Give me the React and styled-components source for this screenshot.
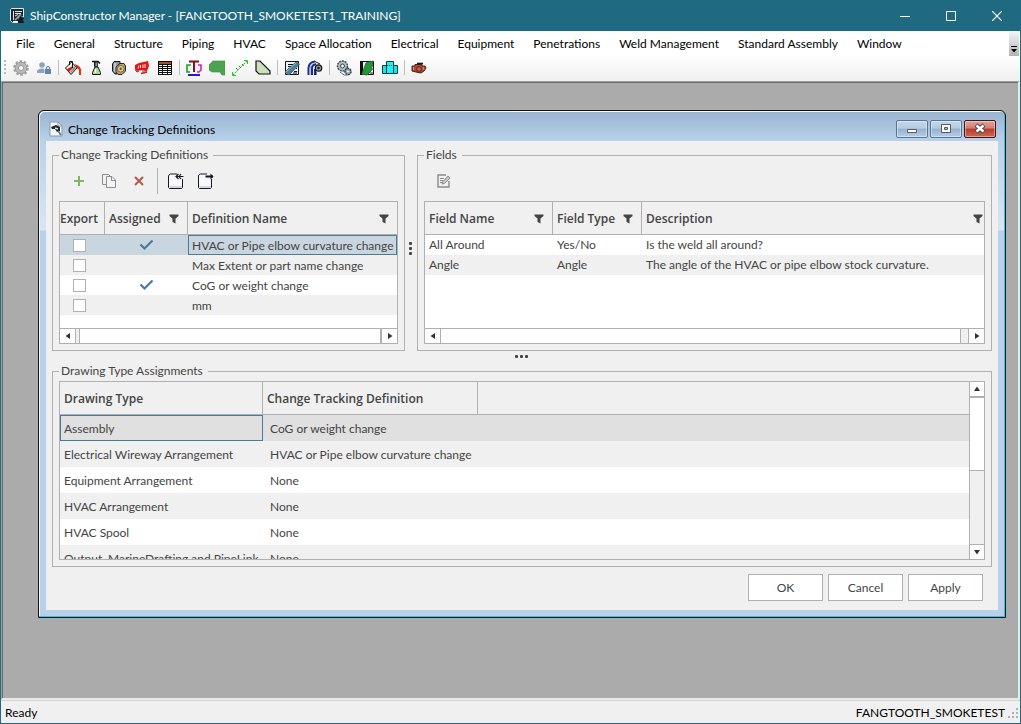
import React, { useState } from 'react'
import styled, { createGlobalStyle, css } from 'styled-components'

const colors = {
  frame: '#1f6a80',
  line: '#b0b0b0',
  panel: '#f0f0f0',
  text: '#444444',
  accent: '#4c7b96',
  selected: '#c9d6df',
  selectedGray: '#e0e0e0',
  workspace: '#ababab',
}

const GlobalStyle = createGlobalStyle`
  * {
    box-sizing: border-box;
  }

  body {
    margin: 0;
    font-family: Lato, 'Open Sans', sans-serif;
    font-size: 12px;
    line-height: 16px;
    color: #000;
  }

  button, input {
    font: inherit;
    color: inherit;
    margin: 0;
  }

  svg {
    display: block;
    flex: none;
  }
`

const AppWindow = styled.div`
  min-height: 100vh;
  display: flex;
  flex-direction: column;
  border: 1px solid ${colors.frame};
  border-top: 0;
  background: ${colors.panel};
`

const TitleBar = styled.header`
  display: flex;
  align-items: center;
  height: 31px;
  padding-left: 8px;
  gap: 5px;
  background: ${colors.frame};
  color: #fff;
`

const WindowTitle = styled.h1`
  flex: 1;
  margin: 0;
  font-size: 12px;
  font-weight: 400;
`

const CaptionButton = styled.button`
  display: flex;
  align-items: center;
  justify-content: center;
  width: 46px;
  height: 31px;
  padding: 0;
  border: 0;
  background: none;
`

const Captions = styled.div`
  display: flex;
`

const CommandArea = styled.div`
  display: flex;
  align-items: flex-start;
  padding-right: 1px;
  background: linear-gradient(#fff 25px, #fcfcfc 28px, #f0f0f0);
`

const Commands = styled.div`
  flex: 1;
`

const MenuBar = styled.nav`
  display: flex;
  height: 25px;
  padding-left: 6px;
`

const MenuItem = styled.button`
  padding: 0 10px 0 9px;
  border: 0;
  background: none;
  white-space: nowrap;
`

const OverflowButton = styled.button`
  display: flex;
  align-items: flex-end;
  justify-content: center;
  width: 10px;
  height: 25px;
  padding: 0 0 3px;
  border: 0;
  background: linear-gradient(#f6f6f6, #b4b4b4);
`

const ToolBar = styled.div`
  display: flex;
  align-items: center;
  height: 25px;
  padding: 0 0 2px 3px;
`

const Grip = styled.span`
  width: 2px;
  height: 15px;
  margin-right: 3px;
  background: repeating-linear-gradient(#b8b8b8 0 2px, transparent 2px 4px);
`

const ToolButton = styled.button`
  display: flex;
  align-items: center;
  justify-content: center;
  width: 23px;
  height: 22px;
  padding: 0;
  border: 0;
  background: none;
`

const ToolSeparator = styled.span`
  width: 1px;
  height: 15px;
  margin: 0 2px 0 3px;
  background: #bdbdbd;
`

const Workspace = styled.main`
  flex: 1;
  padding: 28px 12px 28px 36px;
  border: 1px solid #a0a0a0;
  border-right: 2px solid #e8e8e8;
  border-bottom: 2px solid #e8e8e8;
  background: ${colors.workspace};
  box-shadow: inset 1px 1px #696969;
`

const StatusBar = styled.footer`
  display: flex;
  align-items: center;
  gap: 2px;
  height: 23px;
  padding: 1px 1px 0 4px;
  border-top: 1px solid #d4d4d4;
`

const StatusText = styled.span`
  flex: 1;
`

const Dialog = styled.section`
  padding: 0 7px 7px;
  border: 1px solid #111;
  border-radius: 6px 6px 0 0;
  background: linear-gradient(#99b4d1 0, #b9d1ea 30px, #d8e6f5 119px, #b9d0ea 120px);
  box-shadow: inset -1px -1px #2fc4e6, inset 1px 1px #f4f8fc;
`

const DialogTitleBar = styled.header`
  display: flex;
  align-items: center;
  height: 30px;
  padding: 6px 2px 0 3px;
  gap: 5px;
`

const DialogTitle = styled.h2`
  flex: 1;
  margin: 0;
  padding-top: 1px;
  font-size: 12px;
  font-weight: 400;
`

const DialogButtons = styled.div`
  display: flex;
  gap: 2px;
`

const DialogButton = styled.button`
  display: flex;
  align-items: center;
  justify-content: center;
  width: 32px;
  height: 18px;
  padding: 0;
  border: 1px solid ${(props) => (props.$close ? '#43141b' : '#5b7493')};
  border-radius: 2px;
  background: ${(props) =>
    props.$close
      ? 'linear-gradient(#e6a196, #d27f72 45%, #b93b2a 50%, #c96a55)'
      : 'linear-gradient(#c4d8ec, #b4cbe2 45%, #97b1cd 50%, #b5cfe8)'};
  box-shadow: inset 0 0 0 1px rgba(255, 255, 255, 0.4);
`

const DialogBody = styled.div`
  padding: 6px 6px 9px;
  background: ${colors.panel};
  color: ${colors.text};
`

const TopPanels = styled.div`
  display: grid;
  grid-template-columns: minmax(0, 353fr) 12px minmax(0, 575fr);
`

const Group = styled.fieldset`
  min-width: 0;
  margin: 0;
  padding: 0 6px 6px;
  border: 1px solid ${colors.line};
`

const Legend = styled.legend`
  padding: 0 5px 0 2px;
`

const Splitter = styled.div`
  display: flex;
  flex-direction: ${(props) => (props.$vertical ? 'column' : 'row')};
  align-items: center;
  justify-content: center;
  gap: 2px;
  height: ${(props) => (props.$vertical ? 'auto' : '12px')};
  padding: 0 2px 2px 0;

  & > i {
    width: 3px;
    height: 3px;
    border-radius: 1px;
    background: ${colors.text};
  }
`

const PanelTools = styled.div`
  display: flex;
  align-items: center;
  height: 38px;
  padding: 0 0 2px 5px;
`

const PanelButton = styled.button`
  display: flex;
  align-items: center;
  justify-content: center;
  width: 30px;
  height: 26px;
  padding: 0;
  border: 0;
  background: none;
`

const PanelSeparator = styled.span`
  width: 1px;
  height: 26px;
  margin: 0 3px;
  background: ${colors.line};
`

const GridBox = styled.div`
  display: flex;
  flex-direction: ${(props) => (props.$row ? 'row' : 'column')};
  height: ${(props) => props.$height}px;
  margin-top: ${(props) => (props.$row ? 2 : 0)}px;
  border: 1px solid ${colors.line};
  background: #fff;
  overflow: hidden;
`

const TableArea = styled.div`
  flex: 1;
  min-width: 0;
  overflow: hidden;
`

const Table = styled.table`
  width: 100%;
  table-layout: fixed;
  border-spacing: 0;
`

const HeadCell = styled.th`
  width: ${(props) => (props.$width ? `${props.$width}px` : 'auto')};
  height: 33px;
  padding: 2px ${(props) => (props.$flush ? 1 : 8)}px 0 4px;
  ${(props) => props.$tight && css`padding: 2px 0 0;`}
  border-right: 1px solid ${colors.line};
  border-bottom: 1px solid ${colors.line};
  background: ${colors.panel};
  font-family: 'Open Sans', sans-serif;
  font-weight: 600;
  text-align: left;
  white-space: nowrap;

  &:last-child {
    border-right: 0;
  }
`

const HeadContent = styled.div`
  display: flex;
  align-items: center;
  justify-content: space-between;
`

const Row = styled.tr`
  height: ${(props) => props.$height}px;

  &:nth-child(even) {
    background: ${colors.panel};
  }

  &:nth-child(n) {
    ${(props) => props.$background && css`background: ${props.$background};`}
  }
`

const Cell = styled.td`
  padding: ${(props) => (props.$tall ? 2 : 0)}px 0 0 ${(props) => props.$indent || 4}px;
  white-space: nowrap;
  box-shadow: ${(props) => (props.$focused ? `inset 0 0 0 1px ${colors.accent}` : 'none')};
`

const MarkCell = styled.td`
  padding: 0;

  & > svg {
    margin: 0 auto;
  }
`

const CheckBox = styled.input`
  appearance: none;
  display: block;
  width: 13px;
  height: 13px;
  border: 1px solid ${colors.line};
  background: #fff;

  &:checked {
    background: ${colors.accent};
  }
`

const ScrollBar = styled.div`
  display: flex;
  flex-direction: ${(props) => (props.$vertical ? 'column' : 'row')};
  flex: none;
  ${(props) => (props.$vertical ? 'width: 15px' : 'height: 15px')};
  background: ${colors.panel};
  border: 0 solid ${colors.line};
  ${(props) => (props.$vertical ? 'border-left-width: 1px' : 'border-top-width: 1px')};
`

const ScrollButton = styled.button`
  display: flex;
  align-items: center;
  justify-content: center;
  flex: none;
  width: ${(props) => (props.$vertical ? 14 : 15)}px;
  height: 14px;
  padding: 0;
  border: 0;
  background: #fff;
  box-shadow: 0 0 0 1px ${colors.line};
`

const Track = styled.div`
  flex: 1;
  display: flex;
  flex-direction: ${(props) => (props.$vertical ? 'column' : 'row')};
  padding: ${(props) => props.$padding};
`

const Thumb = styled.div`
  flex: ${(props) => props.$size || '1'};
  background: #fff;
  border: 0 solid ${colors.line};
  border-width: ${(props) => (props.$vertical ? '1px 0' : '0 1px')};
`

const DialogActions = styled.div`
  display: flex;
  justify-content: flex-end;
  gap: 5px;
  padding: 7px 9px 0 0;
`

const ActionButton = styled.button`
  width: 75px;
  height: 27px;
  padding: 0;
  border: 1px solid ${colors.line};
  background: #fff;
`

// 16x16 drawings of the main tool bar
const toolIcons = {
  gear: (
    <>
      <circle cx="8" cy="8" r="6.6" fill="none" stroke="#a3a3a3" strokeWidth="2.4" strokeDasharray="2.6 1.6" />
      <circle cx="8" cy="8" r="4.3" fill="none" stroke="#b9b9b9" strokeWidth="3.6" />
      <circle cx="8" cy="8" r="5.8" fill="none" stroke="#9d9d9d" />
      <circle cx="8" cy="8" r="2.6" fill="#f5f5f5" stroke="#999" />
    </>
  ),
  users: (
    <>
      <circle cx="6" cy="5" r="2.8" fill="#8ba6bb" />
      <path d="M1 13V11Q2 8.5 6 8.5Q8 8.5 8.5 9.5V13Z" fill="#8ba6bb" />
      <path d="M10.5 9V7.5Q12 5.5 13.5 7.5V9" fill="none" stroke="#6386a3" strokeWidth="1.2" />
      <path d="M9 9H15V14H9Z" fill="#6386a3" />
    </>
  ),
  bucket: (
    <>
      <path d="M0.5 8L6.5 2L12 8L6 14.5Z" fill="#f0eeee" stroke="#111" />
      <path d="M2 9L8 6L8 8L4 12Z" fill="#d51b12" />
      <path d="M6 13L11 8L9 6L7 10L5 12Z" fill="#8f8b8b" />
      <path d="M4.5 5V1.5H7.5V8" fill="none" stroke="#111" />
      <path d="M10 4L14 6L16 9V15H14V10L11 7Z" fill="#e0300f" />
    </>
  ),
  flask: (
    <>
      <path d="M4 1.5H10L12 3.5" fill="none" stroke="#111" strokeWidth="1.6" />
      <path d="M6.5 2V6L8 8" fill="none" stroke="#111" />
      <path d="M7 2H9.5V7H7Z" fill="#6f9a99" stroke="#223" strokeWidth=".8" />
      <path d="M7 7L4.5 12.5V14.5H12.5V12.5L10 7Z" fill="#b2d39e" stroke="#111" />
      <path d="M7.5 9V13" stroke="#f4ffe9" strokeWidth="1.4" />
    </>
  ),
  hose: (
    <>
      <path d="M3 1.5H9V4L6 8V14H4L1.5 11V4Z" fill="#8797a3" stroke="#151515" />
      <path d="M4 3V12" stroke="#d4dce2" strokeWidth="1.4" />
      <path d="M9 3.5H13L14.5 6V11L11 14.5H7L5 12V7Z" fill="#bda372" stroke="#2b2417" />
      <circle cx="9.8" cy="8.8" r="3.4" fill="#dcc79a" stroke="#7b6339" />
      <circle cx="9.8" cy="8.8" r="1.2" fill="#6d5732" />
    </>
  ),
  tag: (
    <>
      <path d="M1 5L5 3L14 1L15 6L13 11L9 10L3 11L1 9Z" fill="#e01616" />
      <path d="M4 8.5L5 5.5M6.5 8V5M9 8V4.5M11 8V4" stroke="#fff" fill="none" strokeWidth=".9" />
      <path d="M1 9.5L3 12L5 11M8 11H13" stroke="#6b3c3c" fill="none" />
      <path d="M7 13.5L13 12" stroke="#d01a1a" strokeWidth="1.6" />
    </>
  ),
  table: (
    <>
      <path d="M1 1H15V15H1Z" fill="#111" />
      <path d="M2 2H14V4H2Z" fill="#a5502a" />
      {[5, 7, 9, 11, 13].map((y) => (
        <path key={y} d={`M2 ${y}H5V${y + 1}H2ZM6 ${y}H10V${y + 1}H6ZM11 ${y}H14V${y + 1}H11Z`} fill="#fff" />
      ))}
    </>
  ),
  structure: (
    <>
      <path d="M5 5H1V12H4" fill="none" stroke="#13a51e" strokeWidth="1.6" />
      <path d="M12 5H15V10L13 12H11" fill="none" stroke="#c625c6" strokeWidth="1.6" />
      <path d="M3 1.5H13M8 1V12" fill="none" stroke="#84131a" strokeWidth="2" />
      <path d="M2 15H14" stroke="#2919ce" strokeWidth="2" />
    </>
  ),
  plate: <path d="M4 1H16V15H13L11 12H3L0 10V5Z" fill="#4da351" stroke="#358d3b" strokeWidth=".6" />,
  dimension: (
    <>
      <path d="M1 15L15 1" stroke="#17b31d" strokeDasharray="2 1" />
      <path d="M0.5 12V15.5H4M12 0.5H15.5V4" fill="none" stroke="#17d31d" />
      <path d="M4 8L6 10M7 6L9 8M10 4L12 6" fill="none" stroke="#178a1d" strokeDasharray="1.5 .5" />
    </>
  ),
  bracket: <path d="M1 1H5L15 11V14H4L1 11Z" fill="#cfdfbc" stroke="#111" strokeWidth="1.2" />,
  report: (
    <>
      <path d="M1.5 1.5H14.5V14.5H1.5Z" fill="#edf2f4" stroke="#111" />
      <path d="M4 4.5H10M4 6.5H8M4 8.5H6M10 11.5H13M9 13H13M12 8.5H13" stroke="#111" />
      <path d="M1 12L12 2L15.5 4L5 15Z" fill="#4b8097" stroke="#3b6880" />
      <path d="M2 12L12 3" stroke="#92bdca" />
    </>
  ),
  pipes: (
    <>
      <path d="M1.5 15V8Q2 2 8 1.5M5 15V8Q5 5 9 4M8 15V9" fill="none" stroke="#1b2a8e" strokeWidth="2" />
      <path d="M3.2 15V8Q3.5 4 8 3" fill="none" stroke="#8db4ea" strokeWidth="1" />
      <circle cx="11.5" cy="8" r="3.2" fill="#8c9fb0" stroke="#111" strokeWidth="1.3" />
      <circle cx="11.5" cy="8" r="1.2" fill="#111" />
      <path d="M8 1.5L13 4M9 12V15" stroke="#111" />
    </>
  ),
  gears: (
    <>
      <circle cx="6.5" cy="6" r="5" fill="#b1bec4" stroke="#3b464b" strokeWidth="1.4" strokeDasharray="2 .8" />
      <circle cx="6.5" cy="6" r="2" fill="#ecf1f3" stroke="#3b464b" />
      <circle cx="12" cy="11.5" r="3.1" fill="#91a6b0" stroke="#26343a" strokeWidth="1.3" strokeDasharray="2 .7" />
      <circle cx="12" cy="11.5" r="1" fill="#fff" />
      <path d="M4 12L8 15H12" fill="none" stroke="#6a7b83" />
    </>
  ),
  book: (
    <>
      <path d="M1.5 1.5H14.5V14.5H1.5Z" fill="#eaf1e8" stroke="#111" />
      <path d="M1 1H4V15H1Z" fill="#111" />
      <path d="M7 3L14 1L12 11L8 15L3 14Z" fill="#279638" stroke="#1b7a2a" />
      <path d="M13 6H15M13 9H15M11 13H14" stroke="#333" />
    </>
  ),
  volume: (
    <>
      <path d="M0.5 5.5H15.5V13.5H0.5Z" fill="#14e5ed" stroke="#093d46" />
      <path d="M4.5 1.5H11.5V13.5H4.5Z" fill="#1cf2f5" stroke="#093d46" />
      <path d="M5 5.5H11" stroke="#b32b42" strokeDasharray="1 1" />
    </>
  ),
  valve: (
    <>
      <path d="M1 6H4V4.5H11V6H14L15 8L13 11L10 13L5 12L1 11Z" fill="#a84a35" stroke="#4a2016" />
      <path d="M6 3.5H12" stroke="#201310" strokeWidth="1.6" />
      <circle cx="8" cy="9" r="2.3" fill="#c46a50" stroke="#5c2417" />
      <path d="M12 7L13 10M2.5 7V10" stroke="#e08c6d" />
    </>
  ),
}

const toolGroups = [
  [['gear', 'Settings'], ['users', 'Permissions']],
  [['bucket', 'Colors'], ['flask', 'Materials'], ['hose', 'Stocks'], ['tag', 'Labels'], ['table', 'Tables']],
  [['structure', 'Structure'], ['plate', 'Plates'], ['dimension', 'Dimensions'], ['bracket', 'Brackets']],
  [['report', 'Reports'], ['pipes', 'Pipes']],
  [['gears', 'Equipment'], ['book', 'Catalog'], ['volume', 'Volumes']],
  [['valve', 'Valves']],
]

const menus = [
  'File', 'General', 'Structure', 'Piping', 'HVAC', 'Space Allocation', 'Electrical',
  'Equipment', 'Penetrations', 'Weld Management', 'Standard Assembly', 'Window',
]

const initialDefinitions = [
  { name: 'HVAC or Pipe elbow curvature change', assigned: true, exported: false },
  { name: 'Max Extent or part name change', assigned: false, exported: false },
  { name: 'CoG or weight change', assigned: true, exported: false },
  { name: 'mm', assigned: false, exported: false },
]

const fields = [
  { name: 'All Around', type: 'Yes/No', description: 'Is the weld all around?' },
  { name: 'Angle', type: 'Angle', description: 'The angle of the HVAC or pipe elbow stock curvature.' },
]

const assignments = [
  ['Assembly', 'CoG or weight change'],
  ['Electrical Wireway Arrangement', 'HVAC or Pipe elbow curvature change'],
  ['Equipment Arrangement', 'None'],
  ['HVAC Arrangement', 'None'],
  ['HVAC Spool', 'None'],
  ['Output, MarineDrafting and PipeLink', 'None'],
]

function ToolIcon({ name }) {
  return (
    <svg width="16" height="16" viewBox="0 0 16 16">
      {toolIcons[name]}
    </svg>
  )
}

function Funnel() {
  return (
    <svg width="10" height="10" viewBox="0 0 10 10">
      <path d="M0.5 0.5H9.5V2L6.5 4.5V9.5L3.5 8V4.5L0.5 2Z" fill={colors.text} />
    </svg>
  )
}

function CheckMark() {
  return (
    <svg width="15" height="12" viewBox="0 0 15 12">
      <path d="M1.5 5.5L5.5 9.5L13.5 1.5" fill="none" stroke={colors.accent} strokeWidth="2.2" />
    </svg>
  )
}

const arrows = {
  left: 'M6 1V7L1.5 4Z',
  right: 'M2 1V7L6.5 4Z',
  up: 'M1 6H7L4 1.5Z',
  down: 'M1 2H7L4 6.5Z',
}

function Arrow({ direction }) {
  return (
    <ScrollButton aria-label={`Scroll ${direction}`} $vertical={direction === 'up' || direction === 'down'}>
      <svg width="8" height="8" viewBox="0 0 8 8">
        <path d={arrows[direction]} fill="#333" />
      </svg>
    </ScrollButton>
  )
}

function Dots({ vertical }) {
  return (
    <Splitter $vertical={vertical}>
      <i />
      <i />
      <i />
    </Splitter>
  )
}

function FilterHead({ children, ...props }) {
  return (
    <HeadCell {...props}>
      <HeadContent>
        {children}
        <Funnel />
      </HeadContent>
    </HeadCell>
  )
}

function DefinitionsPanel() {
  const [definitions, setDefinitions] = useState(initialDefinitions)

  const toggleExport = (name) => {
    setDefinitions(definitions.map((d) => (d.name === name ? { ...d, exported: !d.exported } : d)))
  }

  return (
    <Group>
      <Legend>Change Tracking Definitions</Legend>
      <PanelTools>
        <PanelButton aria-label="Add">
          <svg width="12" height="12" viewBox="0 0 12 12">
            <path d="M6 1V11M1 6H11" stroke="#82b366" strokeWidth="2" />
          </svg>
        </PanelButton>
        <PanelButton aria-label="Copy">
          <svg width="14" height="14" viewBox="0 0 14 14" fill="none" stroke="#8c8f96">
            <path d="M4.5 10.5H0.5V0.5H6.5L8.5 2.5" />
            <path d="M4.5 2.5H10L13.5 6V13.5H4.5Z" fill="#f4f4f4" />
            <path d="M9.5 2.5V6.5H13.5" />
          </svg>
        </PanelButton>
        <PanelButton aria-label="Delete">
          <svg width="12" height="12" viewBox="0 0 12 12">
            <path d="M2 2L10 10M10 2L2 10" stroke="#b75945" strokeWidth="2" />
          </svg>
        </PanelButton>
        <PanelSeparator />
        <PanelButton aria-label="Import">
          <svg width="16" height="16" viewBox="0 0 16 16">
            <path d="M2.5 1H12L14.5 5V14.5L13.5 15.5H1.5L0.5 14.5V2.5Z" fill="#f7f9fc" stroke="#14191f" />
            <path d="M1.5 13H14V15H1.5Z" fill="#cfd8e1" />
            <path d="M9 0H16V6H13L9 7Z" fill="#f0f0f0" />
            <path d="M15.5 3.5H8M10.5 1L8 3.5L10.5 6M13 1L11 3.5L13 6" fill="none" stroke="#14191f" strokeWidth="1.2" />
            <path d="M14.5 6V14" stroke="#14191f" />
          </svg>
        </PanelButton>
        <PanelButton aria-label="Export">
          <svg width="16" height="16" viewBox="0 0 16 16">
            <path d="M2.5 1H12L13.5 5V14.5L12.5 15.5H1.5L0.5 14.5V2.5Z" fill="#f7f9fc" stroke="#14191f" />
            <path d="M1.5 13H13V15H1.5Z" fill="#cfd8e1" />
            <path d="M9 0H16V6H13L9 7Z" fill="#f0f0f0" />
            <path d="M7.5 3.5H15" fill="none" stroke="#14191f" strokeWidth="2" />
            <path d="M12.5 0.5L15.5 3.5L12.5 6.5Z" fill="#14191f" />
            <path d="M13.5 7V14" stroke="#14191f" />
          </svg>
        </PanelButton>
      </PanelTools>
      <GridBox $height={143}>
        <TableArea>
          <Table>
            <thead>
              <tr>
                <HeadCell $width={45} $tight>Export</HeadCell>
                <FilterHead $width={83}>Assigned</FilterHead>
                <FilterHead>Definition Name</FilterHead>
              </tr>
            </thead>
            <tbody>
              {definitions.map((definition, index) => (
                <Row key={definition.name} $height={20} $background={index === 0 && colors.selected}>
                  <Cell $indent={13}>
                    <CheckBox
                      type="checkbox"
                      aria-label={`Export ${definition.name}`}
                      checked={definition.exported}
                      onChange={() => toggleExport(definition.name)}
                    />
                  </Cell>
                  <MarkCell>{definition.assigned && <CheckMark />}</MarkCell>
                  <Cell $tall $focused={index === 0}>{definition.name}</Cell>
                </Row>
              ))}
            </tbody>
          </Table>
        </TableArea>
        <ScrollBar>
          <Arrow direction="left" />
          <Track $padding="0 1px 0 4px">
            <Thumb />
          </Track>
          <Arrow direction="right" />
        </ScrollBar>
      </GridBox>
    </Group>
  )
}

function FieldsPanel() {
  return (
    <Group>
      <Legend>Fields</Legend>
      <PanelTools>
        <PanelButton aria-label="Edit field">
          <svg width="14" height="14" viewBox="0 0 14 14" fill="none" stroke="#8a8a8a">
            <path d="M9 1H1V13H12V7" strokeWidth="1.4" />
            <path d="M3 4.5H7M3 6.5H6M3 8.5H5" />
            <path d="M5 10L6 7.5L11 2L13 4L7.5 9.5Z" fill="#c9c9c9" />
          </svg>
        </PanelButton>
      </PanelTools>
      <GridBox $height={143}>
        <TableArea>
          <Table>
            <thead>
              <tr>
                <FilterHead $width={128}>Field Name</FilterHead>
                <FilterHead $width={89}>Field Type</FilterHead>
                <FilterHead $flush>Description</FilterHead>
              </tr>
            </thead>
            <tbody>
              {fields.map((field) => (
                <Row key={field.name} $height={20}>
                  <Cell>{field.name}</Cell>
                  <Cell>{field.type}</Cell>
                  <Cell>{field.description}</Cell>
                </Row>
              ))}
            </tbody>
          </Table>
        </TableArea>
        <ScrollBar>
          <Arrow direction="left" />
          <Track $padding="0 8px 0 0">
            <Thumb />
          </Track>
          <Arrow direction="right" />
        </ScrollBar>
      </GridBox>
    </Group>
  )
}

function AssignmentsPanel() {
  return (
    <Group>
      <Legend>Drawing Type Assignments</Legend>
      <GridBox $row $height={179}>
        <TableArea>
          <Table>
            <thead>
              <tr>
                <HeadCell $width={203}>Drawing Type</HeadCell>
                <HeadCell $width={215}>Change Tracking Definition</HeadCell>
                <HeadCell />
              </tr>
            </thead>
            <tbody>
              {assignments.map(([type, definition], index) => (
                <Row key={type} $height={26} $background={index === 0 && colors.selectedGray}>
                  <Cell $tall $focused={index === 0}>{type}</Cell>
                  <Cell $tall $indent={7}>{definition}</Cell>
                  <Cell />
                </Row>
              ))}
            </tbody>
          </Table>
        </TableArea>
        <ScrollBar $vertical>
          <Arrow direction="up" />
          <Track $vertical $padding="1px 0 0">
            <Thumb $vertical $size="0 0 50%" />
          </Track>
          <Arrow direction="down" />
        </ScrollBar>
      </GridBox>
    </Group>
  )
}

function ChangeTrackingDialog() {
  return (
    <Dialog>
      <DialogTitleBar>
        <svg width="14" height="16" viewBox="0 0 14 16">
          <path d="M1 1H9L13 5V15H1Z" fill="#f6f8fa" stroke="#8b97a3" />
          <path d="M9 1V5H13" fill="none" stroke="#8b97a3" />
          <path d="M2 6L7 4L11 6V10L8 11L6 8L3 8Z" fill="#20272c" />
          <path d="M6 7L9 8" stroke="#dce5ec" strokeWidth="1.5" />
          <path d="M9 10L12 14" stroke="#5884a8" strokeWidth="2" />
        </svg>
        <DialogTitle>Change Tracking Definitions</DialogTitle>
        <DialogButtons>
          <DialogButton aria-label="Minimize">
            <svg width="12" height="12" viewBox="0 0 12 12">
              <path d="M1.5 6.5H10.5V9.5H1.5Z" fill="#fff" stroke="#535b66" />
            </svg>
          </DialogButton>
          <DialogButton aria-label="Maximize">
            <svg width="12" height="12" viewBox="0 0 12 12">
              <path d="M1.5 1.5H10.5V9.5H1.5Z" fill="#fff" stroke="#535b66" />
              <path d="M4.5 4.5H7.5V6.5H4.5Z" fill="#a6bfd9" stroke="#535b66" />
            </svg>
          </DialogButton>
          <DialogButton $close aria-label="Close">
            <svg width="12" height="12" viewBox="0 0 12 12">
              <path d="M2 2L10 9M10 2L2 9" stroke="#4d4a55" strokeWidth="4.4" />
              <path d="M2.5 2.5L9.5 8.5M9.5 2.5L2.5 8.5" stroke="#fff" strokeWidth="2.4" />
            </svg>
          </DialogButton>
        </DialogButtons>
      </DialogTitleBar>
      <DialogBody>
        <TopPanels>
          <DefinitionsPanel />
          <Dots vertical />
          <FieldsPanel />
        </TopPanels>
        <Dots />
        <AssignmentsPanel />
        <DialogActions>
          <ActionButton>OK</ActionButton>
          <ActionButton>Cancel</ActionButton>
          <ActionButton>Apply</ActionButton>
        </DialogActions>
      </DialogBody>
    </Dialog>
  )
}

function App() {
  return (
    <AppWindow>
      <GlobalStyle />
      <TitleBar>
        <svg width="16" height="16" viewBox="0 0 16 16">
          <path d="M2.5 0.5H14.5V9H10V14.5H3.5L1.5 12.5V1.5Z" fill="#20282e" stroke="#dfe7ea" />
          <path d="M4.5 3V12M6 3.5H13M6 5.5H12M6 8L9 6.5" stroke="#dce5e9" />
          <path d="M6 12L12 6" stroke="#9db2bc" strokeWidth="1.5" />
          <path d="M11 8L15 10L14 12L15 15H9V12Z" fill="#151b20" />
          <path d="M4 13.5H9" stroke="#fff" />
        </svg>
        <WindowTitle>ShipConstructor Manager - [FANGTOOTH_SMOKETEST1_TRAINING]</WindowTitle>
        <Captions>
          <CaptionButton aria-label="Minimize">
            <svg width="10" height="10" viewBox="0 0 10 10">
              <path d="M0 5.5H10" stroke="#fff" />
            </svg>
          </CaptionButton>
          <CaptionButton aria-label="Maximize">
            <svg width="10" height="10" viewBox="0 0 10 10">
              <path d="M0.5 0.5H9.5V9.5H0.5Z" fill="none" stroke="#fff" />
            </svg>
          </CaptionButton>
          <CaptionButton aria-label="Close">
            <svg width="10" height="10" viewBox="0 0 10 10">
              <path d="M0 0L10 10M10 0L0 10" stroke="#fff" strokeWidth="1.2" />
            </svg>
          </CaptionButton>
        </Captions>
      </TitleBar>
      <CommandArea>
        <Commands>
          <MenuBar>
            {menus.map((menu) => (
              <MenuItem key={menu}>{menu}</MenuItem>
            ))}
          </MenuBar>
          <ToolBar>
            <Grip />
            {toolGroups.map((group, index) => (
              <React.Fragment key={group[0][0]}>
                {index > 0 && <ToolSeparator />}
                {group.map(([icon, label]) => (
                  <ToolButton key={icon} aria-label={label}>
                    <ToolIcon name={icon} />
                  </ToolButton>
                ))}
              </React.Fragment>
            ))}
          </ToolBar>
        </Commands>
        <OverflowButton aria-label="More commands">
          <svg width="6" height="7" viewBox="0 0 6 7">
            <path d="M0 0H6V1H0ZM0 3H6L3 6.5Z" fill="#000" />
          </svg>
        </OverflowButton>
      </CommandArea>
      <Workspace>
        <ChangeTrackingDialog />
      </Workspace>
      <StatusBar>
        <StatusText>Ready</StatusText>
        <span>FANGTOOTH_SMOKETEST</span>
        <svg width="12" height="12" viewBox="0 0 12 12">
          <path
            d="M9 1H11V3H9ZM5 5H7V7H5ZM9 5H11V7H9ZM1 9H3V11H1ZM5 9H7V11H5ZM9 9H11V11H9Z"
            fill="#b0b0b0"
          />
        </svg>
      </StatusBar>
    </AppWindow>
  )
}

export default App
